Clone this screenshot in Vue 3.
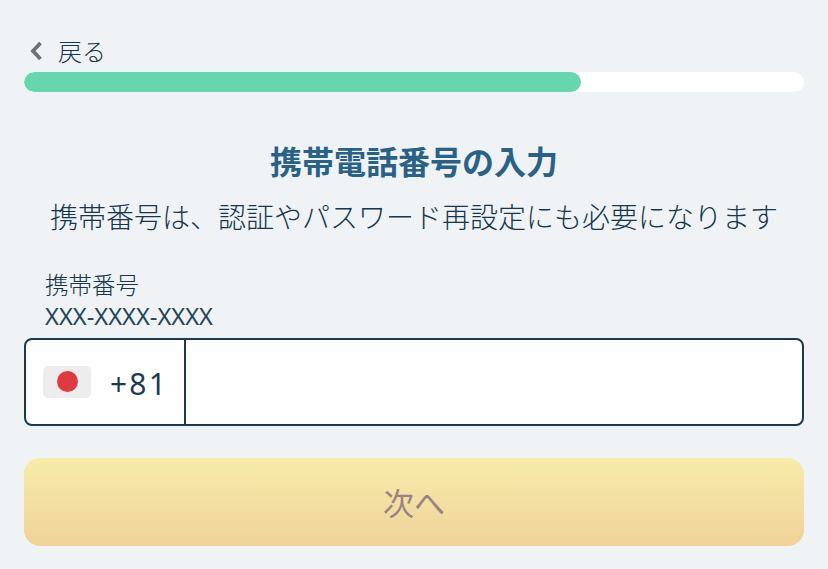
<script setup>
const progress = 71.4
</script>

<template>
  <div class="page">
    <div class="back">
      <svg class="chev" width="14" height="20" viewBox="0 0 14 20">
        <path d="M11.5 2 L4 10 L11.5 18" fill="none" stroke="#6b7278" stroke-width="3.8" />
      </svg>
      <span>戻る</span>
    </div>
    <div class="track"><div class="fill" :style="{ width: progress + '%' }"></div></div>
    <h1 class="title">携帯電話番号の入力</h1>
    <p class="sub">携帯番号は、認証やパスワード再設定にも必要になります</p>
    <div class="label">携帯番号</div>
    <div class="hint">XXX-XXXX-XXXX</div>
    <div class="field">
      <div class="code">
        <div class="flag"><span class="dot"></span></div>
        <span class="num">+81</span>
      </div>
      <div class="input"></div>
    </div>
    <button class="next">次へ</button>
  </div>
</template>

<style>
html, body { margin: 0; background: #eff3f5; }
</style>

<style scoped>
.page {
  box-sizing: border-box;
  width: 828px;
  height: 569px;
  padding: 36px 24px 0;
  background: #eff3f5;
  color: #15364c;
  font-family: "Noto Sans CJK JP", "Noto Sans", sans-serif;
  font-weight: 300;
  overflow: hidden;
}
.back {
  display: flex;
  align-items: center;
  height: 30px;
  margin-bottom: 6px;
  font-size: 24px;
  line-height: 30px;
}
.chev { margin-left: 5px; margin-right: 15px; }
.track {
  height: 20px;
  border-radius: 10px;
  background: #fff;
  overflow: hidden;
}
.fill {
  height: 100%;
  border-radius: 10px;
  background: #66d6ae;
}
.title {
  margin: 47px 0 0;
  text-align: center;
  font-size: 32px;
  line-height: 42px;
  font-weight: 700;
  color: #2a6186;
}
.sub {
  margin: 15px 0 0;
  text-align: center;
  font-size: 28px;
  line-height: 40px;
  white-space: nowrap;
}
.label {
  margin: 31px 0 0 21px;
  font-size: 23.5px;
  line-height: 34px;
}
.hint {
  margin-left: 21px;
  font-size: 23.7px;
  line-height: 30px;
  font-weight: 400;
  color: #264559;
  font-family: "Noto Sans", sans-serif;
}
.field {
  box-sizing: border-box;
  display: flex;
  height: 88px;
  margin-top: 7px;
  background: #fff;
  border: 2px solid #1a3a50;
  border-radius: 8px;
}
.code {
  display: flex;
  align-items: center;
  width: 158px;
  flex: none;
  border-right: 2px solid #1a3a50;
}
.flag {
  display: flex;
  align-items: center;
  justify-content: center;
  width: 48px;
  height: 32px;
  margin: 0 0 0 17px;
  border-radius: 5px;
  background: #ededee;
}
.dot {
  width: 21px;
  height: 21px;
  margin-top: -1px;
  border-radius: 50%;
  background: #df3a40;
}
.num {
  margin: 2px 0 0 19px;
  font-size: 30px;
  font-weight: 400;
  letter-spacing: 2.2px;
  font-family: "Noto Sans", sans-serif;
  color: #1c3b52;
}
.input { flex: 1; }
.next {
  display: block;
  width: 100%;
  height: 88px;
  margin-top: 32px;
  padding: 0 0 2px;
  border: 0;
  border-radius: 16px;
  background: linear-gradient(180deg, #f6ecaa 0%, #efd298 100%);
  color: #9b8288;
  font-family: inherit;
  font-size: 31px;
}
</style>
